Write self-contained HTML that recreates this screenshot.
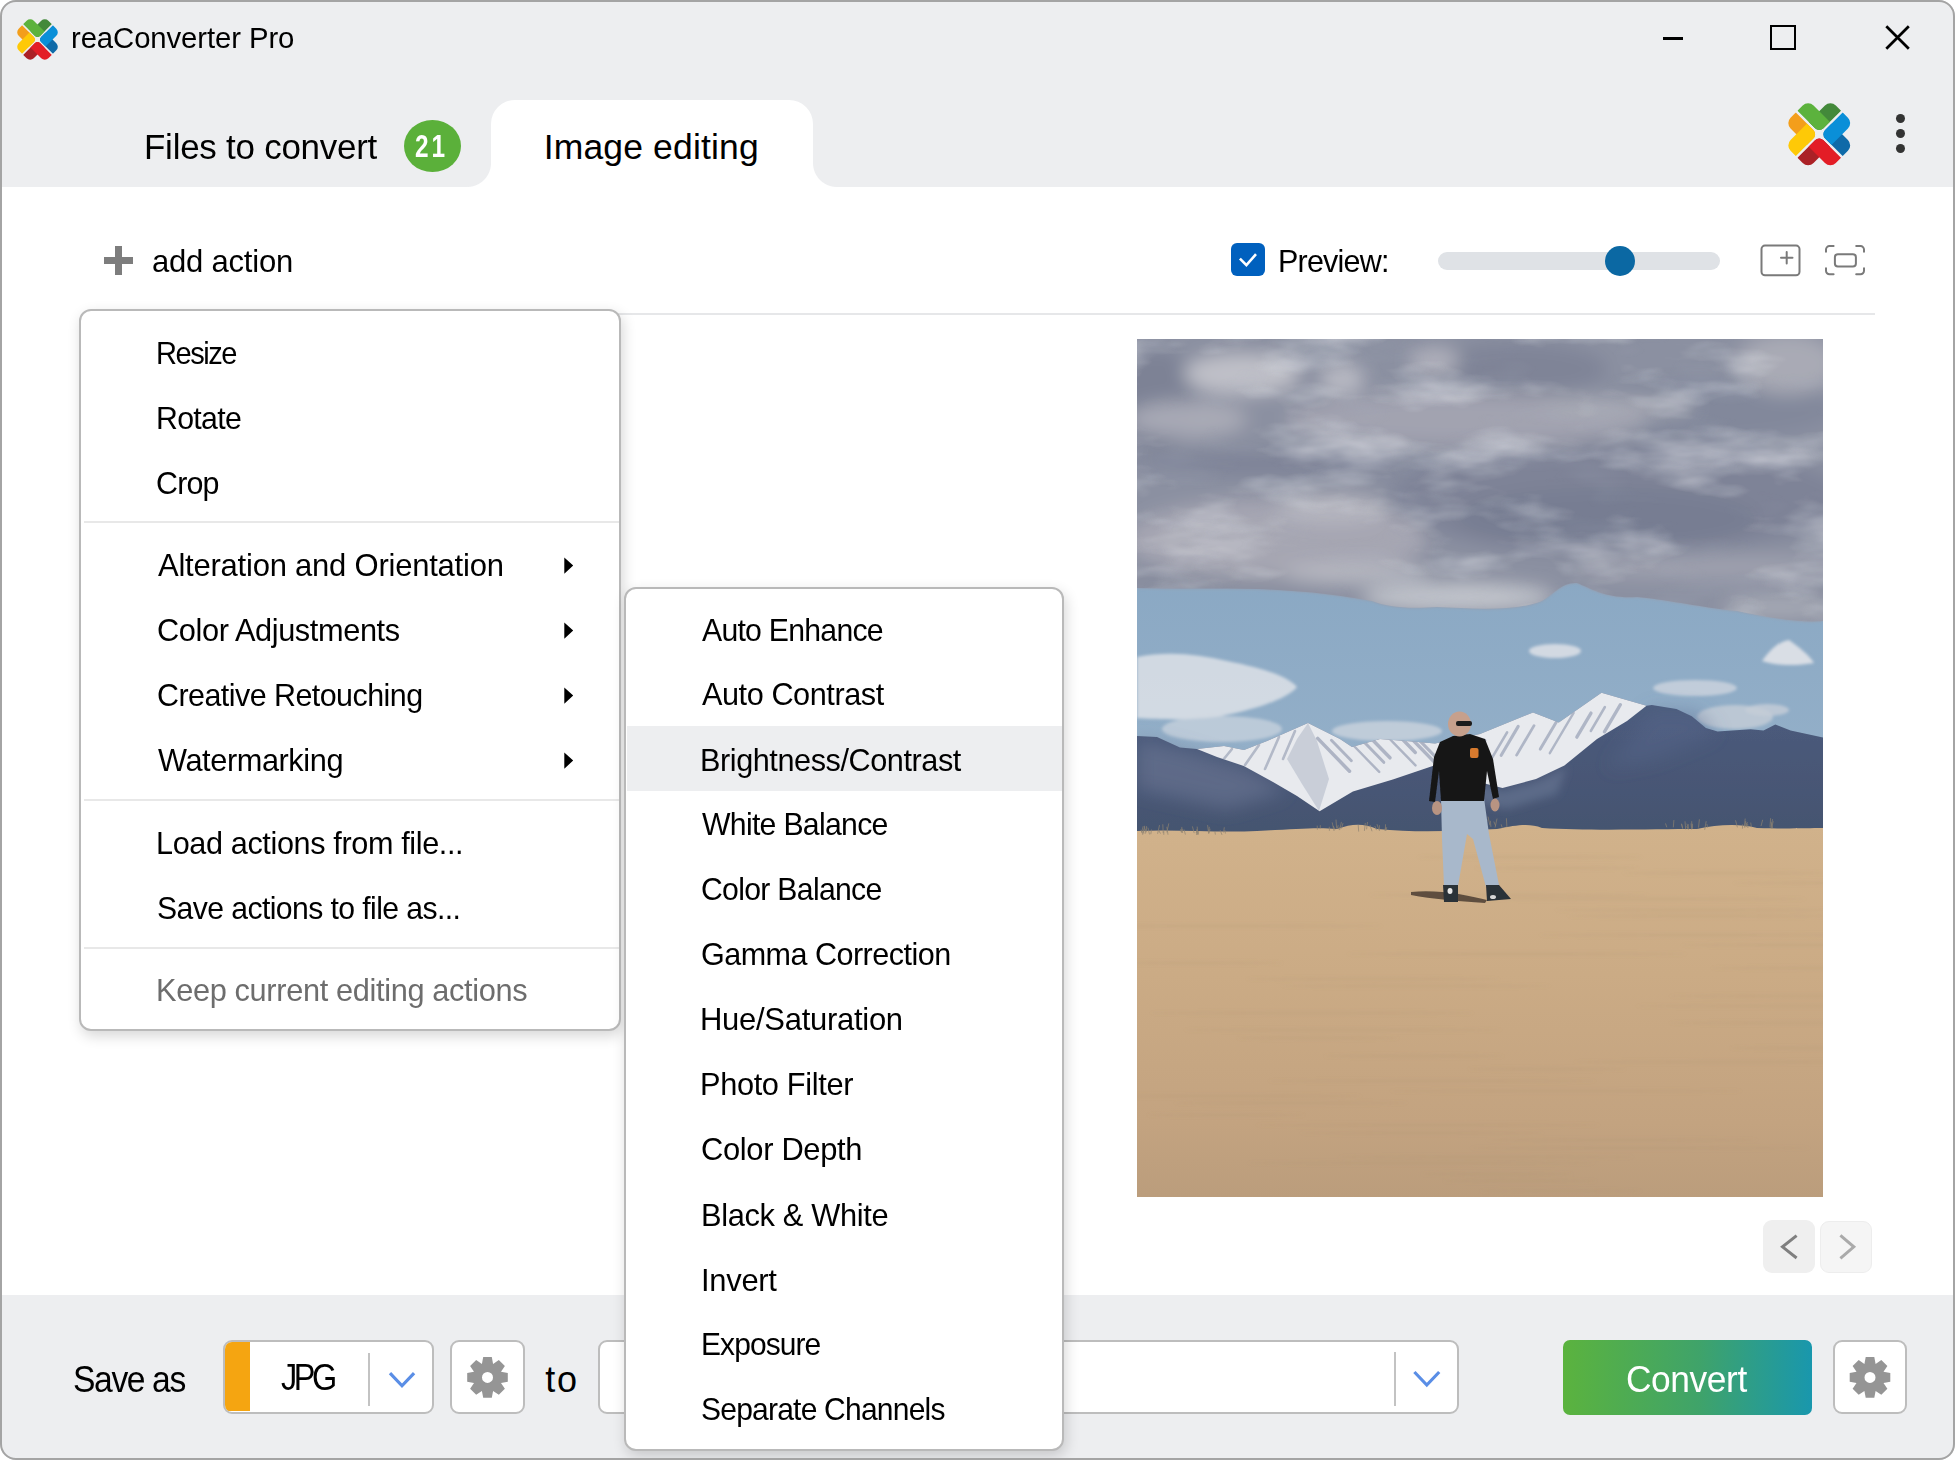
<!DOCTYPE html>
<html><head><meta charset="utf-8"><title>reaConverter Pro</title>
<style>
html,body{margin:0;padding:0;width:1955px;height:1460px;overflow:hidden;background:#fff;font-family:"Liberation Sans", sans-serif;}
.win{position:absolute;left:0;top:0;width:1955px;height:1460px;border-radius:16px;overflow:hidden;background:#fff;}
.frame{position:absolute;left:0;top:0;width:1955px;height:1460px;box-sizing:border-box;border:2px solid #a4a4a4;border-radius:16px;z-index:50;pointer-events:none;}
.a{position:absolute;}
.t{position:absolute;white-space:nowrap;line-height:1;z-index:30;}
.hdr{left:0;top:0;width:1955px;height:187px;background:#edeef0;}
.ftr{left:0;top:1295px;width:1955px;height:165px;background:#edeef0;}
.tab{left:491px;top:100px;width:322px;height:87px;background:#fff;border-radius:24px 24px 0 0;}
.flL{left:467px;top:163px;width:24px;height:24px;background:radial-gradient(circle at 0 0,#edeef0 23.5px,#fff 24.5px);}
.flR{left:813px;top:163px;width:24px;height:24px;background:radial-gradient(circle at 100% 0,#edeef0 23.5px,#fff 24.5px);}
.logo{position:absolute;}
.menu{left:79px;top:309.4px;width:541.7px;height:721.3px;box-sizing:border-box;border:2px solid #b9b9b9;border-radius:12px;background:#fff;box-shadow:2px 5px 14px rgba(0,0,0,0.16);z-index:10;}
.sub{left:624.2px;top:586.7px;width:439.6px;height:864px;box-sizing:border-box;border:2px solid #b9b9b9;border-radius:12px;background:#fff;box-shadow:2px 5px 14px rgba(0,0,0,0.16);z-index:12;}
.sep{height:2.2px;background:#e8e8e8;z-index:11;}
.hl{left:626.5px;top:726px;width:435px;height:65px;background:#edeef0;z-index:13;}
.box{box-sizing:border-box;border:2.5px solid #bdbdbd;border-radius:9px;background:#fff;}
</style></head>
<body>
<div class="win">
  <div class="a hdr"></div>
  <div class="a tab"></div>
  <div class="a flL"></div>
  <div class="a flR"></div>
  <div class="a ftr"></div>

  <!-- title logo -->
  <div class="a" style="left:16.5px;top:18.5px;width:41px;height:41px;"><svg class="logo" viewBox="0 0 100 100"><defs><clipPath id="qga"><rect x="-60" y="-60" width="58.1" height="58.1" rx="9.5"/></clipPath><clipPath id="qba"><rect x="1.9" y="-60" width="58.1" height="58.1" rx="9.5"/></clipPath><clipPath id="qra"><rect x="1.9" y="1.9" width="58.1" height="58.1" rx="9.5"/></clipPath><clipPath id="qya"><rect x="-60" y="1.9" width="58.1" height="58.1" rx="9.5"/></clipPath></defs><g transform="translate(50 50) rotate(45)"><g clip-path="url(#qga)"><rect x="-26" y="-51.2" width="52" height="102.4" rx="12.3" fill="#43893a"/><rect x="-51.2" y="-26" width="102.4" height="52" rx="12.3" fill="#5cb23d"/></g><g clip-path="url(#qba)"><rect x="-51.2" y="-26" width="102.4" height="52" rx="12.3" fill="#0f6aa8"/><rect x="-26" y="-51.2" width="52" height="102.4" rx="12.3" fill="#0a8fd8"/></g><g clip-path="url(#qra)"><rect x="-26" y="-51.2" width="52" height="102.4" rx="12.3" fill="#ab2126"/><rect x="-51.2" y="-26" width="102.4" height="52" rx="12.3" fill="#e31d26"/></g><g clip-path="url(#qya)"><rect x="-51.2" y="-26" width="102.4" height="52" rx="12.3" fill="#f39e1b"/><rect x="-26" y="-51.2" width="52" height="102.4" rx="12.3" fill="#fec907"/></g></g></svg></div>
  <!-- window controls -->
  <div class="a" style="left:1663px;top:37.2px;width:19.5px;height:2.6px;background:#000;"></div>
  <div class="a" style="left:1770px;top:24.5px;width:25.5px;height:25.5px;box-sizing:border-box;border:2.6px solid #000;"></div>
  <svg class="a" style="left:1880px;top:20px;" width="36" height="36" viewBox="0 0 36 36"><path d="M6.3 6.3 L28.8 28.8 M28.8 6.3 L6.3 28.8" stroke="#000" stroke-width="2.7" fill="none"/></svg>
  <!-- right logo -->
  <div class="a" style="left:1788px;top:103px;width:62.5px;height:62.5px;"><svg class="logo" viewBox="0 0 100 100"><defs><clipPath id="qgb"><rect x="-60" y="-60" width="58.1" height="58.1" rx="9.5"/></clipPath><clipPath id="qbb"><rect x="1.9" y="-60" width="58.1" height="58.1" rx="9.5"/></clipPath><clipPath id="qrb"><rect x="1.9" y="1.9" width="58.1" height="58.1" rx="9.5"/></clipPath><clipPath id="qyb"><rect x="-60" y="1.9" width="58.1" height="58.1" rx="9.5"/></clipPath></defs><g transform="translate(50 50) rotate(45)"><g clip-path="url(#qgb)"><rect x="-26" y="-51.2" width="52" height="102.4" rx="12.3" fill="#43893a"/><rect x="-51.2" y="-26" width="102.4" height="52" rx="12.3" fill="#5cb23d"/></g><g clip-path="url(#qbb)"><rect x="-51.2" y="-26" width="102.4" height="52" rx="12.3" fill="#0f6aa8"/><rect x="-26" y="-51.2" width="52" height="102.4" rx="12.3" fill="#0a8fd8"/></g><g clip-path="url(#qrb)"><rect x="-26" y="-51.2" width="52" height="102.4" rx="12.3" fill="#ab2126"/><rect x="-51.2" y="-26" width="102.4" height="52" rx="12.3" fill="#e31d26"/></g><g clip-path="url(#qyb)"><rect x="-51.2" y="-26" width="102.4" height="52" rx="12.3" fill="#f39e1b"/><rect x="-26" y="-51.2" width="52" height="102.4" rx="12.3" fill="#fec907"/></g></g></svg></div>
  <!-- kebab -->
  <div class="a" style="left:1895.6px;top:113.6px;width:9px;height:9px;border-radius:50%;background:#333;"></div>
  <div class="a" style="left:1895.6px;top:128.6px;width:9px;height:9px;border-radius:50%;background:#333;"></div>
  <div class="a" style="left:1895.6px;top:143.6px;width:9px;height:9px;border-radius:50%;background:#333;"></div>
  <!-- badge -->
  <div class="a" style="left:404px;top:120px;width:57.2px;height:52.4px;border-radius:50%;background:#5bb03a;z-index:20;"></div>

  <!-- toolbar -->
  <div class="a" style="left:104px;top:257px;width:28.5px;height:7px;background:#7d7d7d;"></div>
  <div class="a" style="left:114.5px;top:246px;width:7.5px;height:28.7px;background:#7d7d7d;"></div>
  <div class="a" style="left:1231px;top:243px;width:34px;height:33px;border-radius:6px;background:#0060be;"></div>
  <svg class="a" style="left:1231px;top:243px;" width="34" height="33" viewBox="0 0 34 33"><path d="M8.9 15.6 L15.4 22.1 L25 11.2" stroke="#fff" stroke-width="2.6" fill="none"/></svg>
  <div class="a" style="left:1437.5px;top:252.2px;width:282.5px;height:17.6px;border-radius:9px;background:#dfe2e6;"></div>
  <div class="a" style="left:1604.6px;top:245.8px;width:30.5px;height:30.5px;border-radius:50%;background:#0b68a3;"></div>
  <svg class="a" style="left:1750px;top:235px;" width="125" height="50" viewBox="0 0 125 50">
    <rect x="11.5" y="10.6" width="38" height="29.7" rx="3.5" stroke="#7a7a7a" stroke-width="2" fill="none"/>
    <path d="M31 22.7 H42.5 M36.7 17 V28.5" stroke="#7a7a7a" stroke-width="2" stroke-linecap="round" fill="none"/>
    <rect x="84.9" y="19.2" width="21" height="12.4" rx="3" stroke="#7a7a7a" stroke-width="2" fill="none"/>
    <path d="M76 16.8 V14.6 a3.5 3.5 0 0 1 3.5 -3.5 H83.6 M106.2 11.1 H110.5 a3.5 3.5 0 0 1 3.5 3.5 V16.8 M114 33.2 V35.8 a3.5 3.5 0 0 1 -3.5 3.5 H106.2 M83.6 39.3 H79.5 a3.5 3.5 0 0 1 -3.5 -3.5 V33.2" stroke="#7a7a7a" stroke-width="2" stroke-linecap="round" fill="none"/>
  </svg>
  <div class="a" style="left:90px;top:313px;width:1785px;height:1.7px;background:#e6e7e9;"></div>

  <!-- photo -->
  <div class="a" style="left:1137px;top:338.5px;width:686px;height:858px;overflow:hidden;"><svg width="686" height="858" viewBox="0 0 686 858" style="display:block"><defs>
<linearGradient id="sky" x1="0" y1="0" x2="0" y2="1">
 <stop offset="0" stop-color="#7f8597"/><stop offset="0.35" stop-color="#9597a6"/><stop offset="0.6" stop-color="#8e93a4"/><stop offset="1" stop-color="#9a9dab"/>
</linearGradient>
<linearGradient id="blue" x1="0" y1="0" x2="0" y2="1">
 <stop offset="0" stop-color="#7f9fbd"/><stop offset="1" stop-color="#98b3cb"/>
</linearGradient>
<linearGradient id="sand" x1="0" y1="0" x2="0" y2="1">
 <stop offset="0" stop-color="#d1b28b"/><stop offset="0.4" stop-color="#cbab85"/><stop offset="0.8" stop-color="#c3a380"/><stop offset="1" stop-color="#bb9d7c"/>
</linearGradient>
<linearGradient id="mtnL" x1="0" y1="0" x2="0" y2="1">
 <stop offset="0" stop-color="#5d6a8a"/><stop offset="1" stop-color="#46546f"/>
</linearGradient>
<linearGradient id="mtnR" x1="0" y1="0" x2="0" y2="1">
 <stop offset="0" stop-color="#4d5c7e"/><stop offset="1" stop-color="#44536f"/>
</linearGradient>
<filter id="b8" x="-50%" y="-50%" width="200%" height="200%"><feGaussianBlur stdDeviation="9"/></filter>
<filter id="b14" x="-50%" y="-50%" width="200%" height="200%"><feGaussianBlur stdDeviation="14"/></filter>
<filter id="b4" x="-50%" y="-50%" width="200%" height="200%"><feGaussianBlur stdDeviation="4"/></filter>
<filter id="b2" x="-50%" y="-50%" width="200%" height="200%"><feGaussianBlur stdDeviation="1.6"/></filter>
<filter id="turbL" x="0" y="0" width="100%" height="100%"><feTurbulence type="fractalNoise" baseFrequency="0.008 0.022" numOctaves="4" seed="11"/><feColorMatrix type="matrix" values="0 0 0 0 0.80  0 0 0 0 0.81  0 0 0 0 0.85  0 0 0 2.2 -1.05"/></filter><filter id="turbD" x="0" y="0" width="100%" height="100%"><feTurbulence type="fractalNoise" baseFrequency="0.01 0.03" numOctaves="3" seed="4"/><feColorMatrix type="matrix" values="0 0 0 0 0.42  0 0 0 0 0.46  0 0 0 0 0.55  0 0 0 2.0 -1.0"/></filter><filter id="b1"><feGaussianBlur stdDeviation="0.7"/></filter>
</defs><rect width="686" height="520" fill="url(#blue)"/><path d="M0 0 H686 V282 C660 284 630 278 600 272 C560 268 540 262 500 258 C470 260 455 250 440 244 C425 243 418 254 405 262 C380 272 340 270 300 268 C270 270 250 268 235 262 C200 256 170 252 120 250 C80 249 40 250 0 249 Z" fill="url(#sky)" filter="url(#b2)"/><clipPath id="cc"><path d="M0 0 H686 V282 C660 284 630 278 600 272 C560 268 540 262 500 258 C470 260 455 250 440 244 C425 243 418 254 405 262 C380 272 340 270 300 268 C270 270 250 268 235 262 C200 256 170 252 120 250 C80 249 40 250 0 249 Z"/></clipPath><g clip-path="url(#cc)"><g filter="url(#b8)"><rect x="-20" y="-20" width="730" height="320" fill="#8b90a1"/><ellipse cx="20" cy="60" rx="40" ry="50" fill="#7b8194" fill-opacity="0.9"/><ellipse cx="380" cy="30" rx="90" ry="26" fill="#7d8396" fill-opacity="0.9"/><ellipse cx="570" cy="70" rx="130" ry="30" fill="#80869a" fill-opacity="0.8"/><ellipse cx="480" cy="160" rx="230" ry="55" fill="#7c8296" fill-opacity="0.9"/><ellipse cx="470" cy="180" rx="150" ry="30" fill="#767d91" fill-opacity="0.85"/><ellipse cx="140" cy="125" rx="150" ry="12" fill="#7c8296" fill-opacity="0.9"/><ellipse cx="150" cy="238" rx="160" ry="12" fill="#858a9c" fill-opacity="0.8"/><ellipse cx="105" cy="35" rx="58" ry="20" fill="#c2c3ca" fill-opacity="0.95"/><ellipse cx="205" cy="40" rx="22" ry="15" fill="#bdbec6" fill-opacity="0.9"/><ellipse cx="298" cy="22" rx="25" ry="12" fill="#b8b9c2" fill-opacity="0.85"/><ellipse cx="50" cy="80" rx="60" ry="18" fill="#acadb8" fill-opacity="0.9"/><ellipse cx="330" cy="80" rx="180" ry="26" fill="#a6a7b3" fill-opacity="0.85"/><ellipse cx="480" cy="68" rx="80" ry="10" fill="#abacb7" fill-opacity="0.8"/><ellipse cx="650" cy="25" rx="50" ry="30" fill="#aeafb9" fill-opacity="0.85"/><ellipse cx="140" cy="200" rx="150" ry="40" fill="#a8a9b4" fill-opacity="0.9"/><ellipse cx="195" cy="170" rx="55" ry="14" fill="#b8b9c1" fill-opacity="0.85"/><ellipse cx="220" cy="235" rx="75" ry="10" fill="#bcbdc5" fill-opacity="0.85"/><ellipse cx="570" cy="228" rx="130" ry="12" fill="#a2a4b1" fill-opacity="0.8"/><ellipse cx="320" cy="258" rx="95" ry="13" fill="#c6c9d0" fill-opacity="0.95"/><ellipse cx="640" cy="268" rx="55" ry="10" fill="#aeb1bc" fill-opacity="0.8"/></g><rect width="686" height="290" filter="url(#turbL)" opacity="0.62"/><rect width="686" height="290" filter="url(#turbD)" opacity="0.2"/></g><g filter="url(#b2)"><path d="M0 318 C30 312 60 315 90 322 C120 328 150 336 160 348 C150 360 120 370 80 378 C50 382 20 380 0 379Z" fill="#dde2e8" fill-opacity="0.85"/><ellipse cx="85" cy="390" rx="60" ry="13" fill="#cdd5df" fill-opacity="0.7"/><ellipse cx="250" cy="392" rx="55" ry="10" fill="#cbd3dd" fill-opacity="0.8"/><ellipse cx="418" cy="312" rx="26" ry="7" fill="#d9dee5" fill-opacity="0.9"/><path d="M625 322 C632 312 642 302 652 301 C662 308 672 316 677 324 C660 327 640 327 625 322Z" fill="#d9dee5"/><ellipse cx="558" cy="349" rx="42" ry="8" fill="#cdd5de" fill-opacity="0.8"/><ellipse cx="598" cy="378" rx="38" ry="12" fill="#c2cbd6" fill-opacity="0.85"/><ellipse cx="630" cy="371" rx="22" ry="6" fill="#c5cdd8" fill-opacity="0.8"/></g><path d="M0 397 L20 398 L43 408.5 L60 410 L87 407 L107 411 L130 402 L171 384 L203 400 L215 408 L243 400 L269 402 L298 404.5 L343 395 L396 373.5 L421.8 383.6 L464.5 353.8 L509.5 366.8 L514.8 366 L539.5 370 L554.8 377.3 L568.9 389 L580.6 392.6 L613.6 390.2 L626.5 391.4 L638.3 385.5 L653.6 391.4 L686 398.5 L686 505 L0 505 Z" fill="url(#mtnR)" filter="url(#b1)"/><g filter="url(#b8)"><path d="M0 400 L43 410 L110 430 L150 452 L90 470 L0 450Z" fill="#6d7a98" fill-opacity="0.55"/><path d="M515 370 L560 372 L580 395 L520 420 L470 430Z" fill="#5b6a8c" fill-opacity="0.4"/></g><g filter="url(#b4)"><path d="M330 440 L365 452 L400 442 L430 428 L420 455 L370 470 L335 462Z" fill="#6a7895" fill-opacity="0.6"/></g><clipPath id="snowc"><path d="M60 410 L87 407 L107 411 L130 402 L171 384 L203 400 L215 408 L243 400 L269 402 L298 404.5 L343 395 L396 373.5 L421.8 383.6 L464.5 353.8 L509.5 366.8 L490 382 L460 400 L427.4 426.4 L399 440 L365.5 449 L330 440 L295.7 427 L255.8 440.4 L215.9 452.4 L182.6 472.3 L160 457 L136 443 L106.8 427 L80 418 Z"/></clipPath><path d="M60 410 L87 407 L107 411 L130 402 L171 384 L203 400 L215 408 L243 400 L269 402 L298 404.5 L343 395 L396 373.5 L421.8 383.6 L464.5 353.8 L509.5 366.8 L490 382 L460 400 L427.4 426.4 L399 440 L365.5 449 L330 440 L295.7 427 L255.8 440.4 L215.9 452.4 L182.6 472.3 L160 457 L136 443 L106.8 427 L80 418 Z" fill="#e8eaee" filter="url(#b1)"/><g clip-path="url(#snowc)"><g filter="url(#b1)"><path d="M171 384 L160 400 L150 420 L165 445 L182 472 L192 440 L180 402Z" fill="#9aa5b9" fill-opacity="0.4"/><path d="M180.7 399.4 l31.8 32.8" stroke="#8791a8" stroke-width="3.5" stroke-opacity="0.6" stroke-linecap="round"/><path d="M194.4 401.2 l20.0 20.6" stroke="#8791a8" stroke-width="2.9" stroke-opacity="0.6" stroke-linecap="round"/><path d="M208.7 398.5 l33.5 34.4" stroke="#8791a8" stroke-width="2.4" stroke-opacity="0.6" stroke-linecap="round"/><path d="M218.8 394.5 l28.0 28.8" stroke="#8791a8" stroke-width="3.0" stroke-opacity="0.6" stroke-linecap="round"/><path d="M229.1 394.2 l23.9 24.6" stroke="#8791a8" stroke-width="3.5" stroke-opacity="0.6" stroke-linecap="round"/><path d="M246.6 393.6 l31.9 32.8" stroke="#8791a8" stroke-width="2.4" stroke-opacity="0.6" stroke-linecap="round"/><path d="M258.7 393.3 l19.6 20.2" stroke="#8791a8" stroke-width="3.4" stroke-opacity="0.6" stroke-linecap="round"/><path d="M269.3 394.2 l34.7 35.7" stroke="#8791a8" stroke-width="3.4" stroke-opacity="0.6" stroke-linecap="round"/><path d="M282.7 401.6 l27.9 28.7" stroke="#8791a8" stroke-width="3.1" stroke-opacity="0.6" stroke-linecap="round"/><path d="M122 406 L108 426" stroke="#8791a8" stroke-width="2.6" stroke-opacity="0.55" stroke-linecap="round"/><path d="M142 398 L128 430" stroke="#8791a8" stroke-width="2.6" stroke-opacity="0.55" stroke-linecap="round"/><path d="M158 392 L146 420" stroke="#8791a8" stroke-width="2.6" stroke-opacity="0.55" stroke-linecap="round"/><path d="M95 410 L86 421" stroke="#8791a8" stroke-width="2.6" stroke-opacity="0.55" stroke-linecap="round"/><path d="M347.6 401.6 l-20.9 35.5" stroke="#8791a8" stroke-width="3.6" stroke-opacity="0.58" stroke-linecap="round"/><path d="M370.1 393.3 l-17.6 29.9" stroke="#8791a8" stroke-width="2.6" stroke-opacity="0.58" stroke-linecap="round"/><path d="M381.2 387.4 l-17.0 28.9" stroke="#8791a8" stroke-width="3.1" stroke-opacity="0.58" stroke-linecap="round"/><path d="M397.0 386.6 l-17.4 29.5" stroke="#8791a8" stroke-width="2.8" stroke-opacity="0.58" stroke-linecap="round"/><path d="M420.5 380.9 l-17.2 29.2" stroke="#8791a8" stroke-width="3.0" stroke-opacity="0.58" stroke-linecap="round"/><path d="M436.6 373.8 l-23.8 40.4" stroke="#8791a8" stroke-width="2.4" stroke-opacity="0.58" stroke-linecap="round"/><path d="M454.0 374.1 l-14.2 24.1" stroke="#8791a8" stroke-width="3.3" stroke-opacity="0.58" stroke-linecap="round"/><path d="M467.9 368.0 l-14.1 24.0" stroke="#8791a8" stroke-width="2.5" stroke-opacity="0.58" stroke-linecap="round"/><path d="M483.4 365.7 l-16.0 27.1" stroke="#8791a8" stroke-width="3.3" stroke-opacity="0.58" stroke-linecap="round"/></g></g><path d="M0 492 C40 490 80 494 120 492 C160 490 180 488 200 490 C215 485 225 484 240 490 C280 494 320 492 360 490 C380 486 392 484 405 489 C450 492 520 490 560 490 C580 486 600 484 620 489 C650 490 670 489 686 489 L686 858 L0 858Z" fill="url(#sand)" filter="url(#b1)"/><g><path d="M48.4 495.6 l-1.4 -5.2" stroke="#8d8270" stroke-width="1" stroke-opacity="0.7"/><path d="M4.6 493.2 l1.6 -6.0" stroke="#8d8270" stroke-width="1" stroke-opacity="0.7"/><path d="M57.2 494.1 l-1.8 -6.7" stroke="#8d8270" stroke-width="1" stroke-opacity="0.7"/><path d="M71.5 493.5 l0.9 -5.7" stroke="#8d8270" stroke-width="1" stroke-opacity="0.7"/><path d="M26.8 495.8 l0.0 -3.7" stroke="#8d8270" stroke-width="1" stroke-opacity="0.7"/><path d="M60.7 495.2 l-0.5 -7.6" stroke="#8d8270" stroke-width="1" stroke-opacity="0.7"/><path d="M13.8 495.2 l0.7 -4.7" stroke="#8d8270" stroke-width="1" stroke-opacity="0.7"/><path d="M44.5 493.6 l-0.9 -3.5" stroke="#8d8270" stroke-width="1" stroke-opacity="0.7"/><path d="M31.0 495.7 l-1.2 -7.9" stroke="#8d8270" stroke-width="1" stroke-opacity="0.7"/><path d="M88.4 494.5 l-0.5 -3.3" stroke="#8d8270" stroke-width="1" stroke-opacity="0.7"/><path d="M6.3 493.3 l1.6 -5.5" stroke="#8d8270" stroke-width="1" stroke-opacity="0.7"/><path d="M61.3 495.7 l0.3 -3.7" stroke="#8d8270" stroke-width="1" stroke-opacity="0.7"/><path d="M23.5 494.6 l-1.7 -3.0" stroke="#8d8270" stroke-width="1" stroke-opacity="0.7"/><path d="M5.7 495.8 l-0.0 -3.5" stroke="#8d8270" stroke-width="1" stroke-opacity="0.7"/><path d="M44.3 493.3 l0.6 -5.4" stroke="#8d8270" stroke-width="1" stroke-opacity="0.7"/><path d="M59.7 495.9 l0.4 -4.0" stroke="#8d8270" stroke-width="1" stroke-opacity="0.7"/><path d="M9.2 493.4 l0.4 -6.3" stroke="#8d8270" stroke-width="1" stroke-opacity="0.7"/><path d="M29.8 493.4 l2.0 -9.0" stroke="#8d8270" stroke-width="1" stroke-opacity="0.7"/><path d="M71.7 494.8 l-1.1 -8.7" stroke="#8d8270" stroke-width="1" stroke-opacity="0.7"/><path d="M8.1 494.8 l0.7 -5.2" stroke="#8d8270" stroke-width="1" stroke-opacity="0.7"/><path d="M78.4 495.6 l-0.6 -3.5" stroke="#8d8270" stroke-width="1" stroke-opacity="0.7"/><path d="M60.1 496.0 l-0.4 -5.7" stroke="#8d8270" stroke-width="1" stroke-opacity="0.7"/><path d="M59.1 494.0 l1.2 -3.1" stroke="#8d8270" stroke-width="1" stroke-opacity="0.7"/><path d="M45.6 494.0 l-0.2 -4.3" stroke="#8d8270" stroke-width="1" stroke-opacity="0.7"/><path d="M12.5 495.4 l-1.6 -6.8" stroke="#8d8270" stroke-width="1" stroke-opacity="0.7"/><path d="M6.4 494.5 l1.2 -7.7" stroke="#8d8270" stroke-width="1" stroke-opacity="0.7"/><path d="M72.1 494.3 l1.0 -4.5" stroke="#8d8270" stroke-width="1" stroke-opacity="0.7"/><path d="M26.2 494.1 l-0.4 -8.8" stroke="#8d8270" stroke-width="1" stroke-opacity="0.7"/><path d="M86.6 493.5 l0.7 -5.2" stroke="#8d8270" stroke-width="1" stroke-opacity="0.7"/><path d="M85.0 495.9 l-1.8 -4.6" stroke="#8d8270" stroke-width="1" stroke-opacity="0.7"/><path d="M20.6 494.8 l1.9 -8.7" stroke="#8d8270" stroke-width="1" stroke-opacity="0.7"/><path d="M5.1 494.2 l-1.2 -3.4" stroke="#8d8270" stroke-width="1" stroke-opacity="0.7"/><path d="M199.6 489.4 l-0.6 -8.8" stroke="#8d8270" stroke-width="1" stroke-opacity="0.7"/><path d="M198.0 490.7 l-1.7 -3.8" stroke="#8d8270" stroke-width="1" stroke-opacity="0.7"/><path d="M202.3 491.1 l-0.2 -3.4" stroke="#8d8270" stroke-width="1" stroke-opacity="0.7"/><path d="M204.5 489.5 l1.5 -5.3" stroke="#8d8270" stroke-width="1" stroke-opacity="0.7"/><path d="M202.9 490.5 l1.5 -7.6" stroke="#8d8270" stroke-width="1" stroke-opacity="0.7"/><path d="M183.2 489.5 l0.1 -3.3" stroke="#8d8270" stroke-width="1" stroke-opacity="0.7"/><path d="M200.1 489.7 l1.1 -3.5" stroke="#8d8270" stroke-width="1" stroke-opacity="0.7"/><path d="M180.4 490.7 l-0.2 -4.1" stroke="#8d8270" stroke-width="1" stroke-opacity="0.7"/><path d="M192.4 491.8 l-0.1 -4.0" stroke="#8d8270" stroke-width="1" stroke-opacity="0.7"/><path d="M197.1 492.0 l-1.9 -8.6" stroke="#8d8270" stroke-width="1" stroke-opacity="0.7"/><path d="M248.4 491.6 l0.1 -6.3" stroke="#8d8270" stroke-width="1" stroke-opacity="0.7"/><path d="M249.1 491.6 l0.6 -3.4" stroke="#8d8270" stroke-width="1" stroke-opacity="0.7"/><path d="M229.6 490.3 l0.9 -7.3" stroke="#8d8270" stroke-width="1" stroke-opacity="0.7"/><path d="M242.4 491.9 l-0.0 -5.7" stroke="#8d8270" stroke-width="1" stroke-opacity="0.7"/><path d="M221.7 492.6 l-0.5 -6.6" stroke="#8d8270" stroke-width="1" stroke-opacity="0.7"/><path d="M227.4 491.9 l0.9 -7.9" stroke="#8d8270" stroke-width="1" stroke-opacity="0.7"/><path d="M248.0 491.8 l0.4 -3.2" stroke="#8d8270" stroke-width="1" stroke-opacity="0.7"/><path d="M241.7 490.6 l-1.7 -5.4" stroke="#8d8270" stroke-width="1" stroke-opacity="0.7"/><path d="M239.5 491.1 l-1.7 -4.1" stroke="#8d8270" stroke-width="1" stroke-opacity="0.7"/><path d="M235.0 492.3 l-1.9 -6.2" stroke="#8d8270" stroke-width="1" stroke-opacity="0.7"/><path d="M349.4 488.9 l-2.0 -7.7" stroke="#8d8270" stroke-width="1" stroke-opacity="0.7"/><path d="M358.1 488.5 l1.9 -8.9" stroke="#8d8270" stroke-width="1" stroke-opacity="0.7"/><path d="M341.6 488.3 l-1.1 -5.1" stroke="#8d8270" stroke-width="1" stroke-opacity="0.7"/><path d="M344.5 486.4 l-1.6 -4.3" stroke="#8d8270" stroke-width="1" stroke-opacity="0.7"/><path d="M369.9 488.2 l-0.5 -8.9" stroke="#8d8270" stroke-width="1" stroke-opacity="0.7"/><path d="M353.9 487.9 l-0.5 -6.1" stroke="#8d8270" stroke-width="1" stroke-opacity="0.7"/><path d="M346.0 486.6 l0.1 -4.5" stroke="#8d8270" stroke-width="1" stroke-opacity="0.7"/><path d="M352.9 486.3 l-1.9 -8.7" stroke="#8d8270" stroke-width="1" stroke-opacity="0.7"/><path d="M365.2 488.6 l-1.0 -3.3" stroke="#8d8270" stroke-width="1" stroke-opacity="0.7"/><path d="M358.6 486.8 l-1.8 -4.3" stroke="#8d8270" stroke-width="1" stroke-opacity="0.7"/><path d="M348.2 488.4 l1.9 -7.8" stroke="#8d8270" stroke-width="1" stroke-opacity="0.7"/><path d="M567.7 490.8 l1.5 -8.6" stroke="#8d8270" stroke-width="1" stroke-opacity="0.7"/><path d="M570.6 488.7 l-0.7 -3.6" stroke="#8d8270" stroke-width="1" stroke-opacity="0.7"/><path d="M554.6 490.5 l-0.6 -6.0" stroke="#8d8270" stroke-width="1" stroke-opacity="0.7"/><path d="M545.6 489.4 l-0.9 -4.3" stroke="#8d8270" stroke-width="1" stroke-opacity="0.7"/><path d="M554.9 488.6 l-0.2 -6.4" stroke="#8d8270" stroke-width="1" stroke-opacity="0.7"/><path d="M545.7 489.6 l-1.3 -5.0" stroke="#8d8270" stroke-width="1" stroke-opacity="0.7"/><path d="M536.3 488.4 l0.6 -7.3" stroke="#8d8270" stroke-width="1" stroke-opacity="0.7"/><path d="M555.5 489.8 l-0.2 -5.0" stroke="#8d8270" stroke-width="1" stroke-opacity="0.7"/><path d="M561.5 488.6 l0.9 -8.3" stroke="#8d8270" stroke-width="1" stroke-opacity="0.7"/><path d="M551.8 489.7 l-1.9 -5.0" stroke="#8d8270" stroke-width="1" stroke-opacity="0.7"/><path d="M548.7 490.5 l-0.7 -8.2" stroke="#8d8270" stroke-width="1" stroke-opacity="0.7"/><path d="M550.6 488.9 l0.9 -3.6" stroke="#8d8270" stroke-width="1" stroke-opacity="0.7"/><path d="M551.5 490.8 l-2.0 -3.4" stroke="#8d8270" stroke-width="1" stroke-opacity="0.7"/><path d="M529.8 488.3 l-1.3 -3.9" stroke="#8d8270" stroke-width="1" stroke-opacity="0.7"/><path d="M633.0 488.2 l0.6 -9.0" stroke="#8d8270" stroke-width="1" stroke-opacity="0.7"/><path d="M635.5 489.1 l-1.5 -6.0" stroke="#8d8270" stroke-width="1" stroke-opacity="0.7"/><path d="M614.4 488.2 l-0.7 -4.6" stroke="#8d8270" stroke-width="1" stroke-opacity="0.7"/><path d="M607.3 488.7 l1.5 -6.7" stroke="#8d8270" stroke-width="1" stroke-opacity="0.7"/><path d="M600.4 488.4 l-1.9 -7.1" stroke="#8d8270" stroke-width="1" stroke-opacity="0.7"/><path d="M634.6 489.3 l1.6 -7.1" stroke="#8d8270" stroke-width="1" stroke-opacity="0.7"/><path d="M610.9 489.0 l-0.2 -3.9" stroke="#8d8270" stroke-width="1" stroke-opacity="0.7"/><path d="M609.3 488.0 l1.0 -5.0" stroke="#8d8270" stroke-width="1" stroke-opacity="0.7"/><path d="M624.0 487.1 l1.7 -6.3" stroke="#8d8270" stroke-width="1" stroke-opacity="0.7"/><path d="M607.5 487.3 l0.7 -7.7" stroke="#8d8270" stroke-width="1" stroke-opacity="0.7"/><path d="M605.4 489.7 l0.2 -4.3" stroke="#8d8270" stroke-width="1" stroke-opacity="0.7"/><path d="M608.7 488.3 l0.7 -4.2" stroke="#8d8270" stroke-width="1" stroke-opacity="0.7"/><path d="M633.9 489.1 l1.7 -9.0" stroke="#8d8270" stroke-width="1" stroke-opacity="0.7"/></g><g filter="url(#b2)"><ellipse cx="393" cy="518" rx="112" ry="2.2" fill="#a98e6e" fill-opacity="0.10"/><ellipse cx="420" cy="529" rx="82" ry="2.2" fill="#a98e6e" fill-opacity="0.10"/><ellipse cx="587" cy="534" rx="101" ry="2.2" fill="#a98e6e" fill-opacity="0.10"/><ellipse cx="719" cy="544" rx="122" ry="2.2" fill="#a98e6e" fill-opacity="0.10"/><ellipse cx="372" cy="556" rx="139" ry="2.2" fill="#a98e6e" fill-opacity="0.10"/><ellipse cx="506" cy="560" rx="162" ry="2.2" fill="#a98e6e" fill-opacity="0.10"/><ellipse cx="561" cy="571" rx="142" ry="2.2" fill="#a98e6e" fill-opacity="0.10"/><ellipse cx="565" cy="577" rx="134" ry="2.2" fill="#a98e6e" fill-opacity="0.10"/><ellipse cx="83" cy="587" rx="162" ry="2.2" fill="#a98e6e" fill-opacity="0.10"/><ellipse cx="566" cy="596" rx="163" ry="2.2" fill="#a98e6e" fill-opacity="0.10"/><ellipse cx="659" cy="606" rx="114" ry="2.2" fill="#a98e6e" fill-opacity="0.10"/><ellipse cx="380" cy="615" rx="169" ry="2.2" fill="#a98e6e" fill-opacity="0.10"/><ellipse cx="57" cy="624" rx="89" ry="2.2" fill="#a98e6e" fill-opacity="0.10"/><ellipse cx="694" cy="629" rx="119" ry="2.2" fill="#a98e6e" fill-opacity="0.10"/><ellipse cx="236" cy="640" rx="126" ry="2.2" fill="#a98e6e" fill-opacity="0.10"/><ellipse cx="279" cy="647" rx="134" ry="2.2" fill="#a98e6e" fill-opacity="0.10"/><ellipse cx="676" cy="657" rx="143" ry="2.2" fill="#a98e6e" fill-opacity="0.10"/><ellipse cx="674" cy="667" rx="174" ry="2.2" fill="#a98e6e" fill-opacity="0.10"/><ellipse cx="175" cy="674" rx="161" ry="2.2" fill="#a98e6e" fill-opacity="0.10"/><ellipse cx="665" cy="684" rx="132" ry="2.2" fill="#a98e6e" fill-opacity="0.10"/><ellipse cx="206" cy="691" rx="158" ry="2.2" fill="#a98e6e" fill-opacity="0.10"/><ellipse cx="181" cy="699" rx="81" ry="2.2" fill="#a98e6e" fill-opacity="0.10"/><ellipse cx="677" cy="709" rx="84" ry="2.2" fill="#a98e6e" fill-opacity="0.10"/><ellipse cx="277" cy="717" rx="90" ry="2.2" fill="#a98e6e" fill-opacity="0.10"/><ellipse cx="600" cy="723" rx="162" ry="2.2" fill="#a98e6e" fill-opacity="0.10"/><ellipse cx="410" cy="730" rx="79" ry="2.2" fill="#a98e6e" fill-opacity="0.10"/><ellipse cx="295" cy="742" rx="163" ry="2.2" fill="#a98e6e" fill-opacity="0.10"/><ellipse cx="429" cy="752" rx="175" ry="2.2" fill="#a98e6e" fill-opacity="0.10"/><ellipse cx="89" cy="757" rx="135" ry="2.2" fill="#a98e6e" fill-opacity="0.10"/><ellipse cx="154" cy="764" rx="116" ry="2.2" fill="#a98e6e" fill-opacity="0.10"/><ellipse cx="89" cy="776" rx="79" ry="2.2" fill="#a98e6e" fill-opacity="0.10"/><ellipse cx="291" cy="786" rx="171" ry="2.2" fill="#a98e6e" fill-opacity="0.10"/><ellipse cx="285" cy="794" rx="121" ry="2.2" fill="#a98e6e" fill-opacity="0.10"/><ellipse cx="485" cy="801" rx="135" ry="2.2" fill="#a98e6e" fill-opacity="0.10"/><ellipse cx="503" cy="809" rx="169" ry="2.2" fill="#a98e6e" fill-opacity="0.10"/><ellipse cx="349" cy="818" rx="147" ry="2.2" fill="#a98e6e" fill-opacity="0.10"/><ellipse cx="284" cy="824" rx="173" ry="2.2" fill="#a98e6e" fill-opacity="0.10"/><ellipse cx="360" cy="835" rx="76" ry="2.2" fill="#a98e6e" fill-opacity="0.10"/><ellipse cx="383" cy="842" rx="77" ry="2.2" fill="#a98e6e" fill-opacity="0.10"/><ellipse cx="424" cy="852" rx="81" ry="2.2" fill="#a98e6e" fill-opacity="0.10"/></g><g filter="url(#b1)"><path d="M274 553 C300 550 330 556 350 561 L348 564 C320 562 295 560 274 556Z" fill="#4a3d33" fill-opacity="0.85"/><path d="M304 460 L347 459 L352 495 L362 546 L349 548 L336 500 L330 495 L321 547 L307 547 L305 500Z" fill="#a8b8cb"/><path d="M316 397 L333 395 L348 400 L356 420 L362 458 L356 460 L350 432 L347 462 L304 462 L302 432 L298 463 L292 462 L297 418 L303 403Z" fill="#161616"/><ellipse cx="300" cy="469" rx="5" ry="7" fill="#b89482" fill-opacity="1.0"/><ellipse cx="358" cy="466" rx="4.5" ry="6.5" fill="#b89482" fill-opacity="1.0"/><ellipse cx="322.5" cy="385" rx="11.5" ry="12.5" fill="#c6a08c" fill-opacity="1.0"/><rect x="319" y="382" width="16" height="5" rx="2" fill="#1d1d1d"/><rect x="333" y="409" width="8.5" height="10" rx="2" fill="#d77a2e"/><path d="M306 546 L321 546 L321 563 L307 563Z" fill="#2b3038"/><path d="M349 546 L362 546 L374 560 L350 562Z" fill="#2b3038"/><ellipse cx="313" cy="552" rx="2.5" ry="3" fill="#e8e8e8" fill-opacity="1.0"/><ellipse cx="356" cy="558" rx="3" ry="2" fill="#d8d8d8" fill-opacity="1.0"/></g></svg></div>

  <!-- nav buttons -->
  <div class="a" style="left:1762.7px;top:1220px;width:52px;height:52.5px;border-radius:9px;background:#efefef;"></div>
  <div class="a" style="left:1820.2px;top:1220.5px;width:51.8px;height:52px;box-sizing:border-box;border-radius:9px;background:#f5f5f5;border:1.2px solid #ededed;"></div>
  <svg class="a" style="left:1755px;top:1210px;" width="125" height="70" viewBox="0 0 125 70"><path d="M41.6 25.6 L27.5 36.8 L41.6 48" stroke="#7f7f7f" stroke-width="3" fill="none"/><path d="M85.4 25.3 L98.8 36.8 L85.4 48.3" stroke="#aaaaaa" stroke-width="3" fill="none"/></svg>

  <!-- footer controls -->
  <div class="a box" style="left:223.3px;top:1340.4px;width:211px;height:74px;overflow:hidden;">
    <div class="a" style="left:0;top:0;width:24.5px;height:69px;background:#f5a511;"></div>
    <div class="a" style="left:143px;top:10.3px;width:2px;height:53.5px;background:#c3c3c3;"></div>
  </div>
  <svg class="a" style="left:380px;top:1360px;" width="45" height="40" viewBox="0 0 45 40"><path d="M10 13.2 L22 25.8 L34.1 13.2" stroke="#5a8ee6" stroke-width="3.2" fill="none"/></svg>
  <div class="a box" style="left:450.2px;top:1340.4px;width:74.4px;height:74px;"></div>
  <div class="a box" style="left:598.2px;top:1340.4px;width:861px;height:74px;">
    <div class="a" style="left:793.6px;top:9.8px;width:2px;height:54px;background:#c3c3c3;"></div>
  </div>
  <svg class="a" style="left:1400px;top:1360px;" width="45" height="40" viewBox="0 0 45 40"><path d="M14.4 12 L26.8 25 L39.2 12" stroke="#5a8ee6" stroke-width="3.2" fill="none"/></svg>
  <div class="a" style="left:1562.8px;top:1340.4px;width:249.5px;height:75px;border-radius:7px;background:linear-gradient(90deg,#5bb33e 0%,#3fa36a 55%,#1997ad 100%);"></div>
  <div class="a box" style="left:1833.3px;top:1340.4px;width:73.5px;height:74px;"></div>
  <svg class="a" style="left:0;top:0;z-index:5" width="1955" height="1460" viewBox="0 0 1955 1460"><path d="M483.20 1357.10 L491.80 1357.10 L493.09 1363.91 L498.81 1360.01 L504.89 1366.09 L500.99 1371.81 L507.80 1373.10 L507.80 1381.70 L500.99 1382.99 L504.89 1388.71 L498.81 1394.79 L493.09 1390.89 L491.80 1397.70 L483.20 1397.70 L481.91 1390.89 L476.19 1394.79 L470.11 1388.71 L474.01 1382.99 L467.20 1381.70 L467.20 1373.10 L474.01 1371.81 L470.11 1366.09 L476.19 1360.01 L481.91 1363.91Z M493.00 1377.40 A5.5 5.5 0 1 0 482.00 1377.40 A5.5 5.5 0 1 0 493.00 1377.40Z M1865.70 1357.10 L1874.30 1357.10 L1875.59 1363.91 L1881.31 1360.01 L1887.39 1366.09 L1883.49 1371.81 L1890.30 1373.10 L1890.30 1381.70 L1883.49 1382.99 L1887.39 1388.71 L1881.31 1394.79 L1875.59 1390.89 L1874.30 1397.70 L1865.70 1397.70 L1864.41 1390.89 L1858.69 1394.79 L1852.61 1388.71 L1856.51 1382.99 L1849.70 1381.70 L1849.70 1373.10 L1856.51 1371.81 L1852.61 1366.09 L1858.69 1360.01 L1864.41 1363.91Z M1875.50 1377.40 A5.5 5.5 0 1 0 1864.50 1377.40 A5.5 5.5 0 1 0 1875.50 1377.40Z" fill="#959595" fill-rule="evenodd"/></svg>

  <!-- menus -->
  <div class="a menu"></div>
  <div class="a sep" style="left:84px;top:521.3px;width:535px;"></div>
  <div class="a sep" style="left:84px;top:799px;width:535px;"></div>
  <div class="a sep" style="left:84px;top:946.6px;width:535px;"></div>
  <svg class="a" style="left:555px;top:550px;z-index:11;" width="30" height="220" viewBox="0 0 30 220"><path d="M9.3 7.4 L18.2 15.5 L9.3 23.7Z M9.3 72.4 L18.2 80.5 L9.3 88.7Z M9.3 137.4 L18.2 145.5 L9.3 153.7Z M9.3 202.4 L18.2 210.5 L9.3 218.7Z" fill="#000"/></svg>
  <div class="a sub"></div>
  <div class="a hl"></div>

<div class="t" style="left:70.51px;top:23.43px;font-size:29.5px;letter-spacing:-0.096px;color:#000;font-weight:normal;transform:scaleX(0.9936);transform-origin:0 0;">reaConverter Pro</div>
<div class="t" style="left:144.13px;top:130.25px;font-size:35.5px;letter-spacing:-0.248px;color:#000;font-weight:normal;transform:scaleX(0.9846);transform-origin:0 0;">Files to convert</div>
<div class="t" style="left:415.10px;top:131.18px;font-size:30.5px;letter-spacing:3.787px;color:#fff;font-weight:bold;transform:scaleX(0.8000);transform-origin:0 0;">21</div>
<div class="t" style="left:543.70px;top:129.95px;font-size:35.5px;letter-spacing:0.150px;color:#000;font-weight:normal;">Image editing</div>
<div class="t" style="left:152.01px;top:245.84px;font-size:31.5px;letter-spacing:-0.234px;color:#000;font-weight:normal;transform:scaleX(0.9855);transform-origin:0 0;">add action</div>
<div class="t" style="left:1277.59px;top:244.51px;font-size:32px;letter-spacing:-0.833px;color:#000;font-weight:normal;transform:scaleX(0.9528);transform-origin:0 0;">Preview:</div>
<div class="t" style="left:156.16px;top:338.24px;font-size:31.5px;letter-spacing:-1.579px;color:#000;font-weight:normal;transform:scaleX(0.9223);transform-origin:0 0;">Resize</div>
<div class="t" style="left:156.08px;top:403.04px;font-size:31.5px;letter-spacing:-0.727px;color:#000;font-weight:normal;transform:scaleX(0.9613);transform-origin:0 0;">Rotate</div>
<div class="t" style="left:156.44px;top:467.54px;font-size:31.5px;letter-spacing:-0.822px;color:#000;font-weight:normal;transform:scaleX(0.9644);transform-origin:0 0;">Crop</div>
<div class="t" style="left:157.60px;top:550.04px;font-size:31.5px;letter-spacing:-0.230px;color:#000;font-weight:normal;transform:scaleX(0.9841);transform-origin:0 0;">Alteration and Orientation</div>
<div class="t" style="left:156.62px;top:615.04px;font-size:31.5px;letter-spacing:-0.400px;color:#000;font-weight:normal;transform:scaleX(0.9755);transform-origin:0 0;">Color Adjustments</div>
<div class="t" style="left:156.63px;top:679.54px;font-size:31.5px;letter-spacing:-0.552px;color:#000;font-weight:normal;transform:scaleX(0.9661);transform-origin:0 0;">Creative Retouching</div>
<div class="t" style="left:157.60px;top:744.84px;font-size:31.5px;letter-spacing:-0.436px;color:#000;font-weight:normal;transform:scaleX(0.9758);transform-origin:0 0;">Watermarking</div>
<div class="t" style="left:155.66px;top:827.64px;font-size:31.5px;letter-spacing:-0.384px;color:#000;font-weight:normal;transform:scaleX(0.9721);transform-origin:0 0;">Load actions from file...</div>
<div class="t" style="left:156.64px;top:892.74px;font-size:31.5px;letter-spacing:-0.596px;color:#000;font-weight:normal;transform:scaleX(0.9566);transform-origin:0 0;">Save actions to file as...</div>
<div class="t" style="left:155.65px;top:974.84px;font-size:31.5px;letter-spacing:-0.356px;color:#6d6d6d;font-weight:normal;transform:scaleX(0.9758);transform-origin:0 0;">Keep current editing actions</div>
<div class="t" style="left:702.30px;top:614.94px;font-size:31.5px;letter-spacing:-0.772px;color:#000;font-weight:normal;transform:scaleX(0.9587);transform-origin:0 0;">Auto Enhance</div>
<div class="t" style="left:702.30px;top:679.34px;font-size:31.5px;letter-spacing:-0.447px;color:#000;font-weight:normal;transform:scaleX(0.9729);transform-origin:0 0;">Auto Contrast</div>
<div class="t" style="left:700.36px;top:744.64px;font-size:31.5px;letter-spacing:-0.436px;color:#000;font-weight:normal;transform:scaleX(0.9722);transform-origin:0 0;">Brightness/Contrast</div>
<div class="t" style="left:702.30px;top:809.04px;font-size:31.5px;letter-spacing:-0.725px;color:#000;font-weight:normal;transform:scaleX(0.9588);transform-origin:0 0;">White Balance</div>
<div class="t" style="left:701.04px;top:874.34px;font-size:31.5px;letter-spacing:-0.719px;color:#000;font-weight:normal;transform:scaleX(0.9579);transform-origin:0 0;">Color Balance</div>
<div class="t" style="left:701.03px;top:939.44px;font-size:31.5px;letter-spacing:-0.545px;color:#000;font-weight:normal;transform:scaleX(0.9699);transform-origin:0 0;">Gamma Correction</div>
<div class="t" style="left:700.33px;top:1004.34px;font-size:31.5px;letter-spacing:-0.274px;color:#000;font-weight:normal;transform:scaleX(0.9830);transform-origin:0 0;">Hue/Saturation</div>
<div class="t" style="left:700.35px;top:1069.44px;font-size:31.5px;letter-spacing:-0.353px;color:#000;font-weight:normal;transform:scaleX(0.9761);transform-origin:0 0;">Photo Filter</div>
<div class="t" style="left:701.02px;top:1134.04px;font-size:31.5px;letter-spacing:-0.335px;color:#000;font-weight:normal;transform:scaleX(0.9802);transform-origin:0 0;">Color Depth</div>
<div class="t" style="left:700.54px;top:1199.84px;font-size:31.5px;letter-spacing:-0.360px;color:#000;font-weight:normal;transform:scaleX(0.9782);transform-origin:0 0;">Black &amp; White</div>
<div class="t" style="left:700.54px;top:1264.74px;font-size:31.5px;letter-spacing:-0.288px;color:#000;font-weight:normal;transform:scaleX(0.9816);transform-origin:0 0;">Invert</div>
<div class="t" style="left:700.60px;top:1329.34px;font-size:31.5px;letter-spacing:-0.950px;color:#000;font-weight:normal;transform:scaleX(0.9515);transform-origin:0 0;">Exposure</div>
<div class="t" style="left:701.35px;top:1394.04px;font-size:31.5px;letter-spacing:-0.824px;color:#000;font-weight:normal;transform:scaleX(0.9531);transform-origin:0 0;">Separate Channels</div>
<div class="t" style="left:72.67px;top:1361.93px;font-size:36px;letter-spacing:-1.487px;color:#000;font-weight:normal;transform:scaleX(0.9349);transform-origin:0 0;">Save as</div>
<div class="t" style="left:280.80px;top:1360.33px;font-size:36px;letter-spacing:-3.750px;color:#000;font-weight:normal;transform:scaleX(0.9007);transform-origin:0 0;">JPG</div>
<div class="t" style="left:545.20px;top:1361.93px;font-size:36px;letter-spacing:1.798px;color:#000;font-weight:normal;">to</div>
<div class="t" style="left:1626.42px;top:1361.53px;font-size:36px;letter-spacing:-0.404px;color:#fff;font-weight:normal;transform:scaleX(0.9810);transform-origin:0 0;">Convert</div>
</div>
<div class="frame"></div>
</body></html>
